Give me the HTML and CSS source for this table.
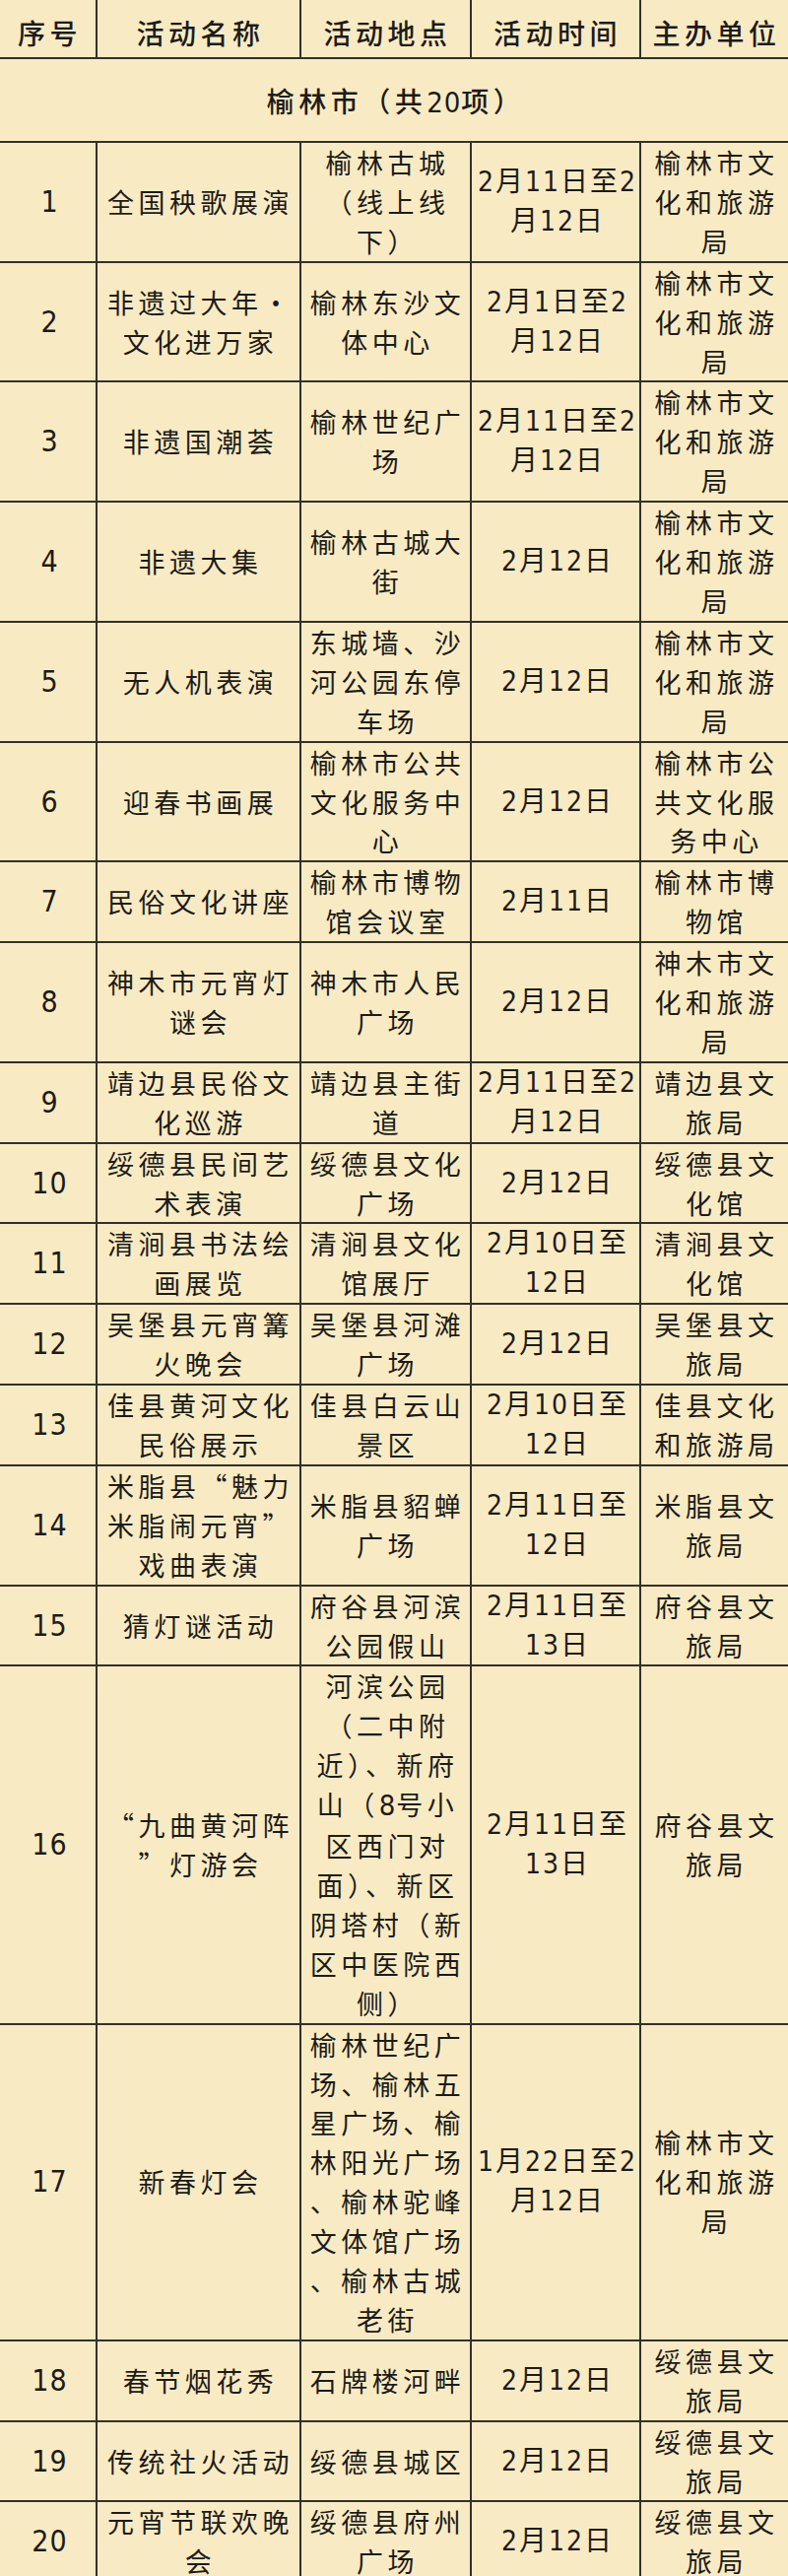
FILE: index.html
```html
<!DOCTYPE html>
<html lang="zh-CN">
<head>
<meta charset="utf-8">
<title>榆林市活动表</title>
<link rel="stylesheet" href="styles.css">
</head>
<body>
<table class="sheet">
  <colgroup>
    <col class="w-no"><col class="w-name"><col class="w-place"><col class="w-time"><col class="w-org">
  </colgroup>
  <thead>
    <tr class="head">
      <th>序号</th><th>活动名称</th><th>活动地点</th><th>活动时间</th><th>主办单位</th>
    </tr>
  </thead>
  <tbody>
    <tr class="section"><td colspan="5">榆林市（共<span class="n">20</span>项）</td></tr>
    <tr><td class="no">1</td><td>全国秧歌展演</td><td>榆林古城<br>（线上线<br>下）</td><td class="time">2月11日至2<br>月12日</td><td>榆林市文<br>化和旅游<br>局</td></tr>
    <tr><td class="no">2</td><td>非遗过大年•<br>文化进万家</td><td>榆林东沙文<br>体中心</td><td class="time">2月1日至2<br>月12日</td><td>榆林市文<br>化和旅游<br>局</td></tr>
    <tr><td class="no">3</td><td>非遗国潮荟</td><td>榆林世纪广<br>场</td><td class="time">2月11日至2<br>月12日</td><td>榆林市文<br>化和旅游<br>局</td></tr>
    <tr><td class="no">4</td><td>非遗大集</td><td>榆林古城大<br>街</td><td class="time">2月12日</td><td>榆林市文<br>化和旅游<br>局</td></tr>
    <tr><td class="no">5</td><td>无人机表演</td><td>东城墙、沙<br>河公园东停<br>车场</td><td class="time">2月12日</td><td>榆林市文<br>化和旅游<br>局</td></tr>
    <tr><td class="no">6</td><td>迎春书画展</td><td>榆林市公共<br>文化服务中<br>心</td><td class="time">2月12日</td><td>榆林市公<br>共文化服<br>务中心</td></tr>
    <tr><td class="no">7</td><td>民俗文化讲座</td><td>榆林市博物<br>馆会议室</td><td class="time">2月11日</td><td>榆林市博<br>物馆</td></tr>
    <tr><td class="no">8</td><td>神木市元宵灯<br>谜会</td><td>神木市人民<br>广场</td><td class="time">2月12日</td><td>神木市文<br>化和旅游<br>局</td></tr>
    <tr><td class="no">9</td><td>靖边县民俗文<br>化巡游</td><td>靖边县主街<br>道</td><td class="time">2月11日至2<br>月12日</td><td>靖边县文<br>旅局</td></tr>
    <tr><td class="no">10</td><td>绥德县民间艺<br>术表演</td><td>绥德县文化<br>广场</td><td class="time">2月12日</td><td>绥德县文<br>化馆</td></tr>
    <tr><td class="no">11</td><td>清涧县书法绘<br>画展览</td><td>清涧县文化<br>馆展厅</td><td class="time">2月10日至<br>12日</td><td>清涧县文<br>化馆</td></tr>
    <tr><td class="no">12</td><td>吴堡县元宵篝<br>火晚会</td><td>吴堡县河滩<br>广场</td><td class="time">2月12日</td><td>吴堡县文<br>旅局</td></tr>
    <tr><td class="no">13</td><td>佳县黄河文化<br>民俗展示</td><td>佳县白云山<br>景区</td><td class="time">2月10日至<br>12日</td><td>佳县文化<br>和旅游局</td></tr>
    <tr><td class="no">14</td><td>米脂县“魅力<br>米脂闹元宵”<br>戏曲表演</td><td>米脂县貂蝉<br>广场</td><td class="time">2月11日至<br>12日</td><td>米脂县文<br>旅局</td></tr>
    <tr><td class="no">15</td><td>猜灯谜活动</td><td>府谷县河滨<br>公园假山</td><td class="time">2月11日至<br>13日</td><td>府谷县文<br>旅局</td></tr>
    <tr><td class="no">16</td><td>“九曲黄河阵<br>”灯游会</td><td>河滨公园<br>（二中附<br>近）、新府<br>山（<span class="n">8</span>号小<br>区西门对<br>面）、新区<br>阴塔村（新<br>区中医院西<br>侧）</td><td class="time">2月11日至<br>13日</td><td>府谷县文<br>旅局</td></tr>
    <tr><td class="no">17</td><td>新春灯会</td><td>榆林世纪广<br>场、榆林五<br>星广场、榆<br>林阳光广场<br>、榆林驼峰<br>文体馆广场<br>、榆林古城<br>老街</td><td class="time">1月22日至2<br>月12日</td><td>榆林市文<br>化和旅游<br>局</td></tr>
    <tr><td class="no">18</td><td>春节烟花秀</td><td>石牌楼河畔</td><td class="time">2月12日</td><td>绥德县文<br>旅局</td></tr>
    <tr><td class="no">19</td><td>传统社火活动</td><td>绥德县城区</td><td class="time">2月12日</td><td>绥德县文<br>旅局</td></tr>
    <tr><td class="no">20</td><td>元宵节联欢晚<br>会</td><td>绥德县府州<br>广场</td><td class="time">2月12日</td><td>绥德县文<br>旅局</td></tr>
  </tbody>
</table>
</body>
</html>
```

FILE: styles.css
```css
html, body {
  margin: 0;
  padding: 0;
  background: #f8ebc4;
}

.sheet {
  width: 800px;
  table-layout: fixed;
  border-collapse: collapse;
  border-style: hidden;
  background: #f8ebc4;
  color: #1d1b18;
  font-family: "Noto Sans CJK SC", "Noto Sans", sans-serif;
  font-size: 27px;
  letter-spacing: 4.5px;
}

.w-no { width: 98px; }
.w-name { width: 207px; }
.w-place { width: 173px; }
.w-time { width: 172px; }
.w-org { width: 150px; }

.sheet th,
.sheet td {
  border: 2px solid #34302b;
  padding: 0 0 0 4px;
  text-align: center;
  vertical-align: middle;
  white-space: nowrap;
  line-height: 39.9px;
  font-weight: 400;
}

.head th {
  height: 58px;
  box-sizing: border-box;
  padding-top: 13px;
  padding-bottom: 5px;
  font-size: 28px;
  font-weight: 500;
  line-height: 40px;
}

.section td {
  padding-top: 22px;
  padding-bottom: 19px;
  line-height: 40px;
  font-size: 28px;
  font-weight: 500;
}

.no,
.time,
.n {
  font-family: "Liberation Sans Narrow", "DejaVu Sans Condensed", "Noto Sans CJK SC", sans-serif;
}

.no {
  font-size: 30px;
  letter-spacing: 1px;
  padding-left: 1px;
}

.time {
  letter-spacing: 2px;
  font-size: 28px;
  padding-left: 2px;
}

.n {
  font-size: 29px;
  letter-spacing: 1px;
}
```
